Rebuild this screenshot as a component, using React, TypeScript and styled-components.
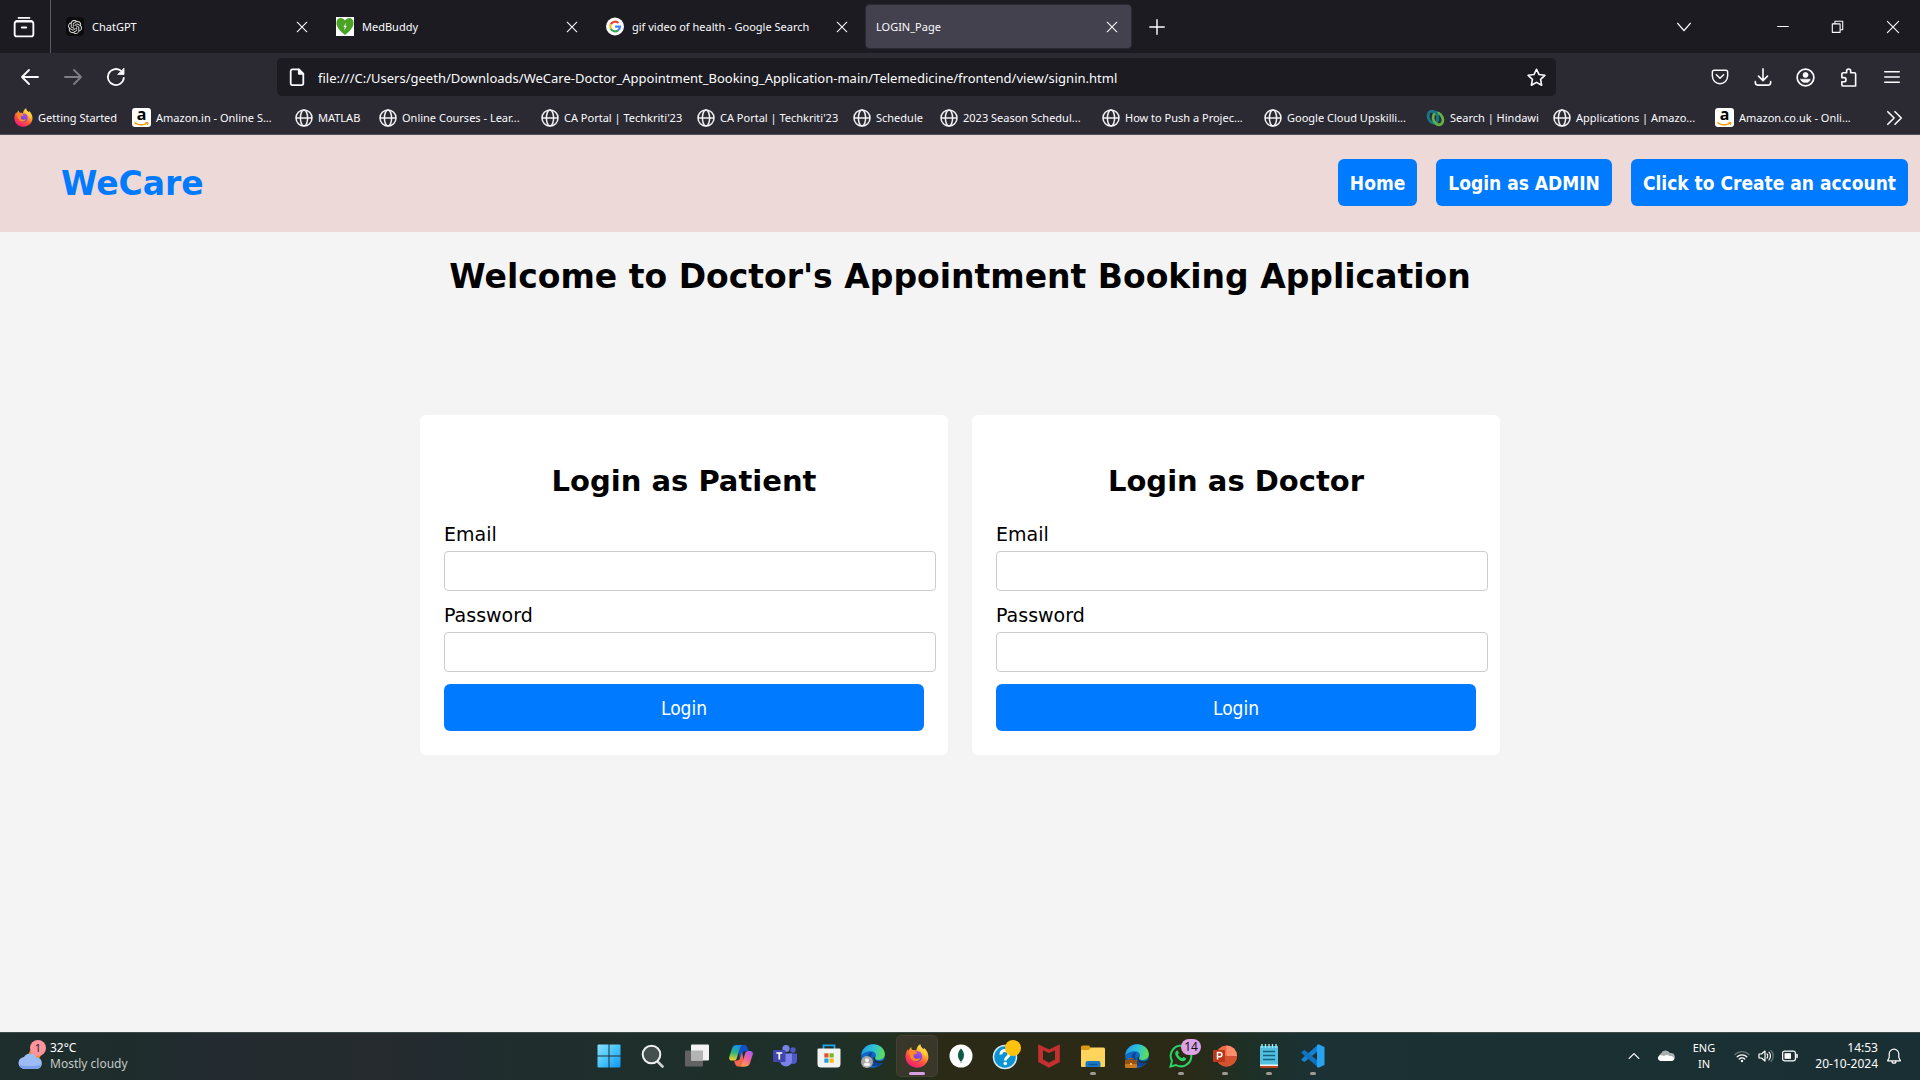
import React, { useId } from "react";
import styled, { createGlobalStyle, css } from "styled-components";
import { SiOpenai } from "react-icons/si";

const ui = '"Noto Sans", "Open Sans", sans-serif';
const page = '"DejaVu Sans", Verdana, sans-serif';
const pageCondensed = '"DejaVu Sans Condensed", Tahoma, sans-serif';

const Global = createGlobalStyle`
  *, *::before, *::after { box-sizing: border-box; }
  body { margin: 0; background: #f4f4f4; }
  button, input { font: inherit; }
  button { border: 0; padding: 0; background: none; color: inherit; cursor: pointer; }
  a { color: inherit; text-decoration: none; }
  svg { display: block; flex: none; }
`;

const Screen = styled.div`
  display: flex;
  flex-direction: column;
  min-height: 100vh;
  font-family: ${ui};
`;

/* ---------- browser ---------- */

const Browser = styled.header`
  background: #2b2a33;
  color: #fbfbfe;
  border-bottom: 1px solid #52525e;
`;

const TabBar = styled.div`
  display: flex;
  align-items: center;
  height: 53px;
  background: #1c1b22;
`;

const ViewButton = styled.button`
  display: grid;
  place-items: center;
  width: 51px;
  height: 53px;
  margin-right: 5px;
  padding-right: 2px;
  border-right: 1px solid #5b5b66;
`;

const TabList = styled.nav`
  display: flex;
  gap: 5px;
`;

const Tab = styled.div<{ $active?: boolean }>`
  display: flex;
  align-items: center;
  gap: 8px;
  width: 265px;
  height: 43px;
  padding: 0 12px 0 10px;
  border-radius: 4px;
  ${(p) => p.$active && css`background: #42414d; box-shadow: 0 0 2px #55545f;`}
`;

const TabTitle = styled.span`
  flex: 1;
  white-space: nowrap;
  font-size: 11px;
`;

const IconButton = styled.button<{ $width?: number; $dim?: boolean }>`
  display: grid;
  place-items: center;
  width: ${(p) => p.$width ?? 43}px;
  height: 32px;
  opacity: ${(p) => (p.$dim ? 0.4 : 1)};
`;

const CloseTab = styled(IconButton)`
  width: 14px;
  height: 24px;
`;

const Spacer = styled.div`
  flex: 1;
`;

const WindowControls = styled.div`
  display: flex;
`;

const AllTabs = styled(IconButton)`
  margin-right: 50px;
`;

const NavBar = styled.div`
  display: flex;
  align-items: center;
  height: 48px;
  padding: 0 7px 0 8px;
`;

const UrlBox = styled.label`
  display: flex;
  flex: 1;
  align-items: center;
  gap: 12px;
  height: 38px;
  margin: 0 142px 0 140px;
  padding: 0 10px 0 11px;
  border-radius: 5px;
  background: #1c1b22;
`;

const UrlInput = styled.input`
  flex: 1;
  min-width: 0;
  padding: 1px 0 0;
  border: 0;
  outline: 0;
  background: transparent;
  color: #fbfbfe;
  font-size: 13px;
`;

const Bookmarks = styled.nav`
  display: flex;
  align-items: center;
  height: 33px;
  padding-left: 14px;
`;

const Bookmark = styled.a<{ $width: number }>`
  display: flex;
  flex: none;
  align-items: center;
  gap: 5px;
  width: ${(p) => p.$width}px;
  white-space: nowrap;
  font-size: 11px;
`;

/* ---------- web page ---------- */

const Site = styled.main`
  flex: 1;
  background: #f4f4f4;
  color: #000;
  font-family: ${page};
`;

const SiteHeader = styled.header`
  display: flex;
  align-items: center;
  justify-content: space-between;
  padding: 24px 12px 26px 61px;
  background: #ecd9d8;
`;

const Brand = styled.div`
  padding-top: 3px;
  color: #007bff;
  font-size: 33px;
  font-weight: bold;
  line-height: 40px;
`;

const SiteNav = styled.nav`
  display: flex;
  gap: 19px;
`;

const NavLink = styled.a`
  padding: 13px 12px 11px;
  border-radius: 6px;
  background: #007bff;
  color: #fff;
  font: bold 19px/23px ${pageCondensed};
`;

const Welcome = styled.h1`
  margin: 25px 0 118px;
  text-align: center;
  font-size: 33px;
  line-height: 40px;
`;

const Forms = styled.div`
  display: flex;
  justify-content: center;
  gap: 24px;
`;

const Card = styled.form`
  width: 528px;
  padding: 24px;
  border-radius: 6px;
  background: #fff;
`;

const CardTitle = styled.h2`
  margin: 25px 0 23px;
  text-align: center;
  font-size: 29px;
  line-height: 35px;
`;

const FieldLabel = styled.label`
  display: block;
  margin-bottom: 5px;
  font-size: 19px;
  line-height: 24px;
`;

const Field = styled.input`
  display: block;
  width: calc(100% + 12px);
  height: 40px;
  margin-bottom: 12px;
  padding: 0 10px;
  border: 1px solid #ccc;
  border-radius: 4px;
  background: #fff;
  font-size: 19px;
`;

const Submit = styled.button`
  display: block;
  width: 100%;
  padding: 13px 12px 11px;
  border-radius: 6px;
  background: #007bff;
  color: #fff;
  font: 19px/23px ${pageCondensed};
`;

/* ---------- taskbar ---------- */

const Taskbar = styled.footer`
  display: grid;
  grid-template-columns: 1fr auto 1fr;
  align-items: center;
  height: 48px;
  padding-bottom: 2px;
  border-top: 1px solid #3c4a48;
  background: linear-gradient(90deg, #1e2e2d 0%, #1e2d2c 7%, #222b30 10%, #252b2e 20%, #222b30 23%, #1f2e2d 27%, #1e3029 43%, #22301f 47%, #2a2a17 49%, #2a2a17 62%, #1e3026 65%, #1b3133 68%, #1a2f33 100%);
  color: #fff;
`;

const Weather = styled.button`
  display: flex;
  align-items: center;
  gap: 4px;
  justify-self: start;
  padding-left: 18px;
  text-align: left;
`;

const WeatherText = styled.span`
  display: grid;
  font-size: 12px;
  line-height: 16px;
`;

const Muted = styled.span`
  color: #c4c9c8;
`;

const Apps = styled.div`
  display: flex;
  gap: 4px;
  padding-left: 2px;
`;

const AppButton = styled.button<{ $active?: boolean }>`
  position: relative;
  display: grid;
  place-items: center;
  width: 40px;
  height: 40px;
  border-radius: 4px;
  ${(p) => p.$active && css`background: #38372a; box-shadow: 0 0 0 1px #414033;`}
`;

const Running = styled.span<{ $active?: boolean }>`
  position: absolute;
  left: 50%;
  bottom: 1px;
  width: ${(p) => (p.$active ? 16 : 6)}px;
  height: 3px;
  border-radius: 2px;
  background: ${(p) => (p.$active ? "#d8a0e0" : "#9b9b92")};
  transform: translateX(-50%);
`;

const Badge = styled.span`
  position: absolute;
  top: 3px;
  right: 0;
  min-width: 20px;
  border-radius: 8px;
  background: #dca4e4;
  color: #111;
  font-size: 12px;
  line-height: 16px;
  text-align: center;
`;

const Tray = styled.div`
  display: flex;
  align-items: center;
  justify-self: end;
  padding-right: 20px;
  line-height: 16px;
`;

const TrayButton = styled.button<{ $width: number }>`
  display: grid;
  place-items: center;
  width: ${(p) => p.$width}px;
  font-size: 11px;
`;

const Clock = styled.button`
  display: grid;
  width: 72px;
  margin-right: 8px;
  text-align: right;
  font-size: 12px;
`;

/* ---------- drawings ---------- */

const Line = ({ d, size = 20, w = 1.6, color = "#fbfbfe", children }: { d?: string; size?: number; w?: number; color?: string; children?: React.ReactNode }) => (
  <svg width={size} height={size} viewBox="0 0 20 20" fill="none" stroke={color} strokeWidth={w} strokeLinecap="round" strokeLinejoin="round" aria-hidden>
    {d && <path d={d} />}
    {children}
  </svg>
);

const Cross = ({ size = 12, w = 1.8 }) => <Line size={size} w={w} d="M2 2 18 18M18 2 2 18" />;

const Globe = () => (
  <svg width="18" height="18" viewBox="0 0 18 18" fill="none" stroke="#f2f2f5" strokeWidth="1.5" aria-hidden>
    <circle cx="9" cy="9" r="8" />
    <ellipse cx="9" cy="9" rx="3.6" ry="8" />
    <path d="M1 9h16" />
  </svg>
);

const AmazonTile = styled.span`
  display: grid;
  justify-items: center;
  align-content: space-between;
  flex: none;
  width: 19px;
  height: 19px;
  padding-bottom: 1px;
  border-radius: 3px;
  background: #fff;
  color: #000;
  font: bold 16px/13px ${ui};
`;

const Amazon = () => (
  <AmazonTile aria-hidden>
    a
    <svg width="15" height="4" viewBox="0 0 15 4" fill="none" stroke="#f90" strokeLinecap="round">
      <path d="M1 .8c3.500 2.600 8.500 2.800 12 .4" strokeWidth="1.500" />
      <path d="M11.800.600l2.300-.100-.600 2.200" strokeWidth="1" />
    </svg>
  </AmazonTile>
);

const Hindawi = () => (
  <svg width="19" height="18" viewBox="0 0 19 18" fill="none" aria-hidden>
    <ellipse cx="7" cy="8.200" rx="4.600" ry="6.200" transform="rotate(-25 7 8.200)" stroke="#17788c" strokeWidth="2.800" />
    <ellipse cx="12" cy="9.800" rx="4.600" ry="6.200" transform="rotate(-25 12 9.800)" stroke="#62b145" strokeWidth="2.800" />
    <path d="M8.500 2.500c2.800 2 3.800 5.500 2.600 9.500" stroke="#17788c" strokeWidth="2.600" />
  </svg>
);

const Firefox = ({ size = 20 }) => {
  const id = useId();
  return (
    <svg width={size} height={size} viewBox="0 0 24 24" aria-hidden>
      <defs>
        <linearGradient id={id + "a"} x1="0.850" y1="0" x2="0.250" y2="1">
          <stop offset="0" stopColor="#fff44f" />
          <stop offset="0.350" stopColor="#ffb02e" />
          <stop offset="0.600" stopColor="#ff5a3a" />
          <stop offset="1" stopColor="#f0147c" />
        </linearGradient>
        <linearGradient id={id + "b"} x1="0.700" y1="0" x2="0.300" y2="1">
          <stop offset="0" stopColor="#b44df0" />
          <stop offset="1" stopColor="#5a3ed0" />
        </linearGradient>
      </defs>
      <path fill={`url(#${id}a)`} d="M15.200.300c.300 2.500 1.200 3.300 3.100 4.900.500-.200.700-.800.600-1.500 3 2.300 4.700 5.900 4.500 9.700C23 19.300 18.100 23.700 12 23.700S.600 19 .500 12.800c0-3.200 1.100-6 2.600-7.800 0 1 .100 1.600.400 2.100.500-1.700 1.500-3.200 2.700-4 0 1.300.500 2.400 1.300 3 1.400-.300 2.800-.100 3.900.400.200-2.600 1.500-5 3.800-6.200z" />
      <circle cx="12" cy="12.300" r="5.200" fill={`url(#${id}b)`} />
      <path fill="#ff8a24" d="M3.700 8.500c1.500-1.700 4.200-2.500 6.700-1.300 1.400.700 1.700 1.900 1.500 2.400-.800.400-2.700.300-3.300 1.700-.200 1 .200 2.400 1.600 3.100 2 .900 3.500-.500 5 0-1.400 2.800-5.500 3.400-8 1.500C4.800 14 4.900 11 3.700 8.500z" />
      <path fill="#ffd23e" d="M15.200.300c.300 2.500 1.200 3.300 3.100 4.900 2.500 2.200 3.300 5.300 2.400 8.300-.900-3-2.500-4.600-4.700-6.300-2.200-1.800-2.500-4.700-.800-6.900z" opacity="0.900" />
    </svg>
  );
};

const OpenAITile = styled.span`
  display: grid;
  place-items: center;
  width: 18px;
  height: 19px;
  border-radius: 4px;
  background: #0c0c0c;
  color: #e6e6e6;
`;

const OpenAI = () => (
  <OpenAITile aria-hidden>
    <SiOpenai size={14} />
  </OpenAITile>
);

const MedBuddy = () => (
  <svg width="18" height="19" viewBox="0 0 19 19" preserveAspectRatio="none" aria-hidden>
    <rect width="19" height="19" fill="#fff" />
    <path fill="#4aa324" d="M9.500 18C5.500 15 .500 11 .500 5.800.500.300 7-.500 9.500 3.500 12-.500 18.500.300 18.500 5.800c0 5.200-5 9.200-9 12.200z" />
    <path fill="#fff" d="M10.800 5.500 7.900 10h1.400l-.900 3.500L11.300 9H9.900z" />
  </svg>
);

const Google = () => (
  <svg width="18" height="19" viewBox="0 0 19 19" fill="none" strokeWidth="2.300" aria-hidden>
    <circle cx="9.500" cy="9.500" r="9.500" fill="#fff" />
    <path stroke="#ea4335" d="M5 7.200A5.200 5.200 0 0 1 13.200 5.900" />
    <path stroke="#fbbc05" d="M5 11.800a5.200 5.200 0 0 1 0-4.600" />
    <path stroke="#34a853" d="M12.800 13.500A5.200 5.200 0 0 1 5 11.800" />
    <path stroke="#4285f4" d="M9.600 9.700h5.100c0 1.600-.600 2.800-1.900 3.800" />
  </svg>
);

const Edge = ({ person }: { person?: boolean }) => {
  const id = useId();
  return (
    <svg width="24" height="24" viewBox="0 0 24 24" aria-hidden>
      <defs>
        <linearGradient id={id} x1="0" y1="0.300" x2="1" y2="0.500">
          <stop offset="0" stopColor="#259be8" />
          <stop offset="0.500" stopColor="#2cc3d6" />
          <stop offset="1" stopColor="#5fe052" />
        </linearGradient>
      </defs>
      <circle cx="12" cy="12" r="11.800" fill="#1267c4" />
      <path fill={`url(#${id})`} d="M.300 11C1 4.500 6.200.200 12 .200c7 0 11.900 5 11.900 9.900 0 3.600-2.800 5.800-6.100 5.800-3 0-3.900-1-3.900-1.600 0-.600 1-1.200 1-2.900 0-2.300-2.200-4.100-5-4.100C6 7.300 2.300 8.800.300 11z" />
      <path fill="#0c4597" d="M9.300 8.200c-2 1.400-3 4-2.500 7 .600 4.500 4.700 7.700 9.500 7.200 2.800-.800 5-2.800 6.300-4.700-5.300 2.400-12.400.500-12.400-5.500 0-1.600.500-3 1.400-3.900z" />
      <path fill="#1d2d2a" d="M14.300 13.200c-.900 1.700-.200 3.500 2.500 4 2.800.500 5.200-.500 7.200-2.300v4l-2-.500c-5.300 2.200-10.500-.600-9.500-5.200z" />
      {person ? (
        <g>
          <circle cx="6" cy="18" r="6" fill="#a7a7a7" />
          <circle cx="6" cy="16.300" r="2" fill="#f0f0f0" />
          <path d="M2.600 21c0-3.300 6.800-3.300 6.800 0-1.800 1.900-5 1.900-6.800 0z" fill="#f0f0f0" />
        </g>
      ) : (
        <g>
          <path d="M4 16v-1.500h4V16" fill="none" stroke="#9a5a10" strokeWidth="1.200" />
          <rect x="0" y="16" width="12" height="8" rx="1" fill="#c9791b" />
          <path d="M0 17a1 1 0 0 1 1-1h10a1 1 0 0 1 1 1v3H0z" fill="#99520d" />
          <rect x="5" y="19" width="2" height="2" fill="#f8c15a" />
        </g>
      )}
    </svg>
  );
};

const Windows = () => (
  <svg width="24" height="24" viewBox="0 0 24 24" aria-hidden>
    <defs>
      <linearGradient id="win" gradientUnits="userSpaceOnUse" x1="0" y1="0" x2="24" y2="24">
        <stop stopColor="#8be1fd" />
        <stop offset="0.500" stopColor="#48c4fc" />
        <stop offset="1" stopColor="#0c93f8" />
      </linearGradient>
    </defs>
    <path fill="url(#win)" d="M1.500.500h10v11H.500v-10a1 1 0 0 1 1-1zM12.500.500h10a1 1 0 0 1 1 1v10h-11zM.500 12.500h11v11h-10a1 1 0 0 1-1-1zM12.500 12.500h11v10a1 1 0 0 1-1 1h-10z" />
  </svg>
);

const Search = () => (
  <svg width="24" height="24" viewBox="0 0 24 24" aria-hidden>
    <path d="m16.500 17.500 5 5" stroke="#cfd2d1" strokeWidth="2.600" strokeLinecap="round" />
    <circle cx="10.500" cy="10.500" r="8.800" fill="#44504e" stroke="#eef0ef" strokeWidth="2" />
  </svg>
);

const TaskView = () => (
  <svg width="24" height="24" viewBox="0 0 24 24" aria-hidden>
    <rect x="0" y="6.500" width="18" height="16" rx="1" fill="#626262" />
    <rect x="6" y="0.500" width="18" height="16" rx="1" fill="#f3f3f3" />
    <rect x="6" y="6.500" width="12" height="10" fill="#b4b4b4" />
  </svg>
);

const Copilot = () => (
  <svg width="24" height="24" viewBox="0 0 24 24" aria-hidden>
    <defs>
      <linearGradient id="cpa" x1="0.500" y1="0" x2="0.400" y2="1">
        <stop stopColor="#1a8df0" />
        <stop offset="0.500" stopColor="#2eb67a" />
        <stop offset="1" stopColor="#f6d02c" />
      </linearGradient>
      <linearGradient id="cpb" x1="0.700" y1="0" x2="0.300" y2="1">
        <stop stopColor="#b05cf0" />
        <stop offset="0.500" stopColor="#f0609a" />
        <stop offset="1" stopColor="#ffa04a" />
      </linearGradient>
    </defs>
    <path fill="#1450c8" d="M8 1h7.500c1.500 0 2.400 1 2.800 2.400L19.500 7h-3c-1.700 0-2.700 1-3.200 2.700L11 16z" />
    <path fill="#f2674e" d="M16 22.500H9c-1.500 0-2.400-1-2.800-2.400L5 16.500h3c1.700 0 2.700-1 3.200-2.700L13 8z" />
    <path fill="url(#cpa)" d="M7.500 1h6c-1.500.400-2.200 1.500-2.700 3.100L8 13.700c-.500 1.800-1.500 2.800-3.300 2.800H3C.800 16.500-.300 15 .300 12.800L3.200 4C3.900 2 5.300 1 7.500 1z" />
    <path fill="url(#cpb)" d="M16.500 22.500h-6c1.500-.400 2.200-1.500 2.700-3.100L16 9.800C16.500 8 17.500 7 19.300 7H21c2.200 0 3.300 1.500 2.700 3.700l-2.900 8.800c-.700 2-2.100 3-4.300 3z" />
  </svg>
);

const Teams = () => (
  <svg width="24" height="24" viewBox="0 0 24 24" aria-hidden>
    <circle cx="20" cy="6" r="2.700" fill="#5059c9" />
    <path d="M16 9.500h8v6.500a4 4 0 0 1-8 0z" fill="#5059c9" />
    <circle cx="13" cy="4.500" r="3.600" fill="#7b83eb" />
    <path d="M7 9.500h12v7a6 6 0 0 1-12 0z" fill="#7b83eb" />
    <rect x="0" y="6" width="12.500" height="12" rx="1" fill="#4046ab" />
    <path d="M3.300 9h6M6.300 9v6.500" stroke="#fff" strokeWidth="1.700" />
  </svg>
);

const Store = () => (
  <svg width="24" height="24" viewBox="0 0 24 24" aria-hidden>
    <path d="M6.500 5V1.300h11V5" fill="none" stroke="#20a8ec" strokeWidth="1.800" />
    <path d="M1.500 4.500h21a1 1 0 0 1 1 1V20a3.500 3.500 0 0 1-3.500 3.500H4A3.500 3.500 0 0 1 .500 20V5.500a1 1 0 0 1 1-1z" fill="#f1f3f3" />
    <path d="M7.300 9.300h4.200v4.200H7.300z" fill="#e8502a" />
    <path d="M12.500 9.300h4.200v4.200h-4.200z" fill="#7db61c" />
    <path d="M7.300 14.500h4.200v4.200H7.300z" fill="#1ba1e2" />
    <path d="M12.500 14.500h4.200v4.200h-4.200z" fill="#f9b512" />
  </svg>
);

const Mongo = () => (
  <svg width="24" height="24" viewBox="0 0 24 24" aria-hidden>
    <circle cx="12" cy="12" r="11.500" fill="#fff" />
    <path d="M12 4.500c3.300 3.300 4.600 8.500.400 12.800l-.200 2h-.400l-.200-2C7.400 13 8.700 7.800 12 4.500z" fill="#116149" />
    <path d="M12 6v11" stroke="#0a4633" strokeWidth="0.700" />
  </svg>
);

const Help = () => (
  <svg width="32" height="34" viewBox="0 0 32 34" aria-hidden>
    <circle cx="16" cy="18" r="11.500" fill="#0c93d4" stroke="#d8eaf2" strokeWidth="1.500" />
    <path d="M12 15.500c-.500-5.500 8.300-5.500 8 0 0 2.700-3.700 2.700-3.700 6" fill="none" stroke="#fff" strokeWidth="3" />
    <circle cx="16.300" cy="24.500" r="1.800" fill="#fff" />
    <circle cx="24" cy="9" r="8" fill="#ffc20e" />
  </svg>
);

const McAfee = () => (
  <svg width="24" height="24" viewBox="0 0 24 24" aria-hidden>
    <path d="M1.200.300 12 5.500 22.800.300V18L12 23.800 1.200 18z" fill="#c5302f" />
    <path d="M6 6.200 12 9l6-2.800v9.300l-6 3.200-6-3.200z" fill="#2a2a18" />
  </svg>
);

const Explorer = () => (
  <svg width="24" height="24" viewBox="0 0 24 24" aria-hidden>
    <path d="M0 3a1.500 1.500 0 0 1 1.500-1.500H8l2 2.500-2 3H0z" fill="#d99a12" />
    <path d="M0 6h7.500l2.500-2.500h12.500A1.500 1.500 0 0 1 24 5v17a1 1 0 0 1-1 1H1a1 1 0 0 1-1-1z" fill="#ffd45c" />
    <path d="M4.500 23v-4a2 2 0 0 1 2-2h11a2 2 0 0 1 2 2v4z" fill="#1b78c4" />
    <path d="M8 20.500h8" stroke="#0f549a" strokeWidth="1.500" strokeLinecap="round" />
  </svg>
);

const WhatsApp = () => (
  <svg width="24" height="24" viewBox="0 0 24 24" aria-hidden>
    <path d="M1.500 22.500 3 17A10.300 10.300 0 1 1 7 21z" fill="none" stroke="#2bd366" strokeWidth="2" />
    <path d="M8.400 6.500c.600 0 1.400 2.200 1.400 2.600 0 .500-1 1.200-.900 1.500.900 1.700 2.200 2.900 4 3.600.400.100 1.200-1.400 1.600-1.300.500.100 2.600 1.200 2.600 1.400 0 2-1.700 3-3.300 3C10.500 17 6.300 12.600 6.200 9.500c0-1.600 1.100-3 2.200-3z" fill="#2bd366" />
  </svg>
);

const PowerPoint = () => (
  <svg width="24" height="24" viewBox="0 0 24 24" aria-hidden>
    <circle cx="13.500" cy="12" r="10.500" fill="#ed6c47" />
    <path d="M13.500 1.500A10.500 10.500 0 0 1 24 12H13.500z" fill="#ff8f6b" />
    <path d="M3 12h21a10.500 10.500 0 0 1-21 0z" fill="#d35230" />
    <rect x="0" y="6" width="12" height="12" rx="1" fill="#b9371a" />
    <path d="M4.500 15.500v-7h2.300a2 2 0 0 1 0 4.200H4.500" fill="none" stroke="#fff" strokeWidth="1.500" />
  </svg>
);

const Notepad = () => (
  <svg width="24" height="24" viewBox="0 0 24 24" aria-hidden>
    <path d="M3 20h18v3a1 1 0 0 1-1 1H4a1 1 0 0 1-1-1z" fill="#b4471c" />
    <path d="M3 19h18v3H3z" fill="#f3f3f3" />
    <path d="M3 2h18v18.500H3z" fill="#54c0e0" />
    <path d="M5 0v4M8.500 0v4M12 0v4M15.500 0v4M19 0v4" stroke="#a7e6f5" strokeWidth="1.400" />
    <path d="M6 7.500h12M6 11.500h12M6 15.500h12" stroke="#13627e" strokeWidth="1.400" />
  </svg>
);

const VSCode = () => (
  <svg width="24" height="24" viewBox="0 0 24 24" aria-hidden>
    <path d="M17.500.200v6.500L3.500 18 .500 16.300v-1.200z" fill="#1580cc" />
    <path d="M17.500 23.800v-6.500L3.500 6 .500 7.700v1.200z" fill="#1173bd" />
    <path d="m17.500.200 6 2.800v18l-6 2.800-1.500-.800V1z" fill="#27a3f2" />
  </svg>
);

const WeatherIcon = () => (
  <svg width="28" height="36" viewBox="0 0 28 36" aria-hidden>
    <circle cx="17" cy="16" r="6" fill="#f5892a" />
    <path d="M7 31a6 6 0 0 1-1-12 7 7 0 0 1 12.500.500A5.800 5.800 0 0 1 19 31z" fill="#9cbcf5" />
    <path d="M1.500 26.500c5 2 16 2 22 0A5.500 5.500 0 0 1 19 31H7c-3 0-5-2-5.500-4.500z" fill="#7da1ec" />
    <circle cx="20" cy="10" r="8" fill="#ff949c" />
    <text x="20" y="14" textAnchor="middle" fontFamily="Noto Sans, sans-serif" fontSize="11" fill="#222">1</text>
  </svg>
);

const FirefoxView = () => (
  <Line size={22} w={1.7}>
    <path d="M3 4.500h14" />
    <path d="M5 1.700h10" />
    <rect x="1.500" y="5" width="17" height="13.500" rx="2" />
    <path d="M8 10.500h4" />
  </Line>
);

/* ---------- data ---------- */

const tabs = [
  { title: "ChatGPT", icon: <OpenAI /> },
  { title: "MedBuddy", icon: <MedBuddy /> },
  { title: "gif video of health - Google Search", icon: <Google /> },
  { title: "LOGIN_Page", active: true },
];

const bookmarks = [
  { title: "Getting Started", width: 118, icon: <Firefox size={19} /> },
  { title: "Amazon.in - Online S...", width: 163, icon: <Amazon /> },
  { title: "MATLAB", width: 84, icon: <Globe /> },
  { title: "Online Courses - Lear...", width: 162, icon: <Globe /> },
  { title: "CA Portal | Techkriti'23", width: 156, icon: <Globe /> },
  { title: "CA Portal | Techkriti'23", width: 156, icon: <Globe /> },
  { title: "Schedule", width: 87, icon: <Globe /> },
  { title: "2023 Season Schedul...", width: 162, icon: <Globe /> },
  { title: "How to Push a Projec...", width: 162, icon: <Globe /> },
  { title: "Google Cloud Upskilli...", width: 162, icon: <Globe /> },
  { title: "Search | Hindawi", width: 127, icon: <Hindawi /> },
  { title: "Applications | Amazo...", width: 162, icon: <Globe /> },
  { title: "Amazon.co.uk - Onli...", width: 155, icon: <Amazon /> },
];

const apps: { name: string; icon: React.ReactNode; active?: boolean; running?: boolean; badge?: string }[] = [
  { name: "Start", icon: <Windows /> },
  { name: "Search", icon: <Search /> },
  { name: "Task view", icon: <TaskView /> },
  { name: "Copilot", icon: <Copilot /> },
  { name: "Teams", icon: <Teams /> },
  { name: "Store", icon: <Store /> },
  { name: "Edge", icon: <Edge person /> },
  { name: "Firefox", icon: <Firefox size={24} />, active: true, running: true },
  { name: "MongoDB Compass", icon: <Mongo /> },
  { name: "Help", icon: <Help /> },
  { name: "McAfee", icon: <McAfee /> },
  { name: "File Explorer", icon: <Explorer />, running: true },
  { name: "Edge work", icon: <Edge /> },
  { name: "WhatsApp", icon: <WhatsApp />, running: true, badge: "14" },
  { name: "PowerPoint", icon: <PowerPoint />, running: true },
  { name: "Notepad", icon: <Notepad />, running: true },
  { name: "Visual Studio Code", icon: <VSCode />, running: true },
];

const LoginCard = ({ role }: { role: string }) => {
  const id = useId();
  return (
    <Card onSubmit={(e: React.FormEvent) => e.preventDefault()}>
      <CardTitle>Login as {role}</CardTitle>
      <FieldLabel htmlFor={id + "email"}>Email</FieldLabel>
      <Field id={id + "email"} type="email" />
      <FieldLabel htmlFor={id + "password"}>Password</FieldLabel>
      <Field id={id + "password"} type="password" />
      <Submit type="submit">Login</Submit>
    </Card>
  );
};

export default function App() {
  return (
    <Screen>
      <Global />
      <Browser>
        <TabBar>
          <ViewButton aria-label="Firefox View"><FirefoxView /></ViewButton>
          <TabList>
            {tabs.map((t) => (
              <Tab key={t.title} $active={t.active}>
                {t.icon}
                <TabTitle>{t.title}</TabTitle>
                <CloseTab aria-label="Close tab"><Cross size={12} /></CloseTab>
              </Tab>
            ))}
          </TabList>
          <IconButton $width={52} aria-label="New tab"><Line size={16} w={1.8} d="M10 1v18M1 10h18" /></IconButton>
          <Spacer />
          <AllTabs aria-label="List all tabs"><Line size={18} d="m3 6 7 8 7-8" /></AllTabs>
          <WindowControls>
            <IconButton $width={55} aria-label="Minimize"><Line size={12} w={1.7} d="M1 9h18" /></IconButton>
            <IconButton $width={55} aria-label="Restore"><Line size={13} w={1.7} d="M2 6h12v13H2zM6 6V2h12v13h-4" /></IconButton>
            <IconButton $width={55} aria-label="Close"><Cross size={14} w={1.6} /></IconButton>
          </WindowControls>
        </TabBar>
        <NavBar>
          <IconButton aria-label="Back"><Line size={20} w={1.8} d="M18 10H2M9 3l-7 7 7 7" /></IconButton>
          <IconButton aria-label="Forward" $dim><Line size={20} w={1.8} d="M2 10h16M11 3l7 7-7 7" /></IconButton>
          <IconButton aria-label="Reload">
            <Line size={20} w={1.8}>
              <path d="M17.800 11A8 8 0 1 1 14.500 3.500" />
              <path d="M18 1.500v6h-6z" fill="#fbfbfe" strokeWidth="0.800" />
            </Line>
          </IconButton>
          <UrlBox>
            <Line size={18} w={2}>
              <path d="M4.500 1.500h7.500l5 5v10.500a2 2 0 0 1-2 2H5a2 2 0 0 1-2-2V3.500a2 2 0 0 1 1.500-2z" />
              <path d="M12 1.500v5h5z" fill="#fbfbfe" />
            </Line>
            <UrlInput aria-label="Address" defaultValue="file:///C:/Users/geeth/Downloads/WeCare-Doctor_Appointment_Booking_Application-main/Telemedicine/frontend/view/signin.html" />
            <Line size={19} w={1.7} d="m10 1.300 2.700 5.600 6.100.800-4.500 4.200 1.100 6.200-5.400-3-5.400 3 1.100-6.200L1.200 7.700l6.100-.800z" />
          </UrlBox>
          <IconButton aria-label="Pocket"><Line size={18} w={1.6}><path d="M3.500 2.500h13a2 2 0 0 1 2 2V9a8.500 8.500 0 0 1-17 0V4.500a2 2 0 0 1 2-2z" /><path d="m6 7.500 4 4 4-4" /></Line></IconButton>
          <IconButton aria-label="Downloads"><Line size={18} w={1.8} d="M10 1v13M5 9l5 5 5-5M1.500 15v1.500a2.500 2.500 0 0 0 2.500 2.500h12a2.500 2.500 0 0 0 2.500-2.500V15" /></IconButton>
          <IconButton aria-label="Account"><Line size={19} w={1.8}><circle cx="10" cy="10" r="8.800" /><circle cx="10" cy="7.300" r="2.700" fill="#fbfbfe" strokeWidth="0.500" /><path d="M5 11.800h10c0 4.700-10 4.700-10 0z" fill="#fbfbfe" strokeWidth="0.500" /></Line></IconButton>
          <IconButton aria-label="Extensions"><Line size={19} w={1.7} d="M8 5V3.200a2 2 0 0 1 4.300 0V5H16a1.500 1.500 0 0 1 1.500 1.500V19H4.500a1.500 1.500 0 0 1-1.500-1.500v-3h2.200a2.200 2.200 0 0 0 0-4.400H3V6.500A1.500 1.500 0 0 1 4.500 5z" /></IconButton>
          <IconButton aria-label="Menu"><Line size={16} w={2} d="M1 3.500h18M1 10h18M1 16.500h18" /></IconButton>
        </NavBar>
        <Bookmarks>
          {bookmarks.map((b, i) => (
            <Bookmark key={i} href="#" $width={b.width}>{b.icon}{b.title}</Bookmark>
          ))}
          <Spacer />
          <IconButton $width={50} aria-label="More bookmarks"><Line size={18} w={1.8} d="m2 3 7 7-7 7M10 3l7 7-7 7" /></IconButton>
        </Bookmarks>
      </Browser>

      <Site>
        <SiteHeader>
          <Brand>WeCare</Brand>
          <SiteNav>
            <NavLink href="#">Home</NavLink>
            <NavLink href="#">Login as ADMIN</NavLink>
            <NavLink href="#">Click to Create an account</NavLink>
          </SiteNav>
        </SiteHeader>
        <Welcome>Welcome to Doctor's Appointment Booking Application</Welcome>
        <Forms>
          <LoginCard role="Patient" />
          <LoginCard role="Doctor" />
        </Forms>
      </Site>

      <Taskbar>
        <Weather>
          <WeatherIcon />
          <WeatherText><span>32°C</span><Muted>Mostly cloudy</Muted></WeatherText>
        </Weather>
        <Apps>
          {apps.map((a) => (
            <AppButton key={a.name} aria-label={a.name} $active={a.active}>
              {a.icon}
              {a.badge && <Badge>{a.badge}</Badge>}
              {a.running && <Running $active={a.active} />}
            </AppButton>
          ))}
        </Apps>
        <Tray>
          <TrayButton $width={32} aria-label="Hidden icons"><Line size={12} w={2.2} d="m2 14 8-8 8 8" /></TrayButton>
          <TrayButton $width={32} aria-label="OneDrive">
            <svg width="18" height="14" viewBox="0 0 18 14" aria-hidden>
              <path d="M4.500 12a4 4 0 0 1-.500-7.500A5 5 0 0 1 13 4a4 4 0 0 1 1.500 8z" fill="#a9afb0" />
              <path d="M4.500 12c-3 0-4.500-2.500-3-4.500 2-2 4-1 5.500-.500 2-1.500 4-1.500 5.500 0 3-.500 4.500 1 4.500 2.500S16 12 14.500 12z" fill="#fff" />
            </svg>
          </TrayButton>
          <TrayButton $width={44}><span>ENG</span><span>IN</span></TrayButton>
          <TrayButton $width={32} aria-label="Wi-Fi">
            <svg width="16" height="14" viewBox="0 0 16 14" fill="none" stroke="#fff" strokeWidth="1.300" strokeLinecap="round" aria-hidden>
              <path d="M1 5.500a10 10 0 0 1 14 0" opacity="0.350" />
              <path d="M3.200 7.800a6.800 6.800 0 0 1 9.600 0M5.300 10a3.800 3.800 0 0 1 5.400 0" />
              <circle cx="8" cy="12" r="1.200" fill="#fff" stroke="none" />
            </svg>
          </TrayButton>
          <TrayButton $width={16} aria-label="Volume">
            <svg width="16" height="14" viewBox="0 0 16 14" fill="none" stroke="#fff" strokeWidth="1.200" strokeLinecap="round" strokeLinejoin="round" aria-hidden>
              <path d="M1 5v4h2.500L7 12V2L3.500 5zM9 5c1 1 1 3 0 4M11 3.200c2 2 2 5.600 0 7.600" />
              <path d="M13 1.500c3 3 3 8 0 11" opacity="0.350" />
            </svg>
          </TrayButton>
          <TrayButton $width={32} aria-label="Battery">
            <svg width="16" height="12" viewBox="0 0 16 12" aria-hidden>
              <rect x="0.600" y="1.200" width="12.800" height="9.600" rx="2" fill="none" stroke="#fff" strokeWidth="1.200" />
              <rect x="2.500" y="3.200" width="6.500" height="5.600" fill="#fff" />
              <path d="M15 4.500v3" stroke="#fff" strokeWidth="1.500" strokeLinecap="round" />
            </svg>
          </TrayButton>
          <Clock><span>14:53</span><span>20-10-2024</span></Clock>
          <TrayButton $width={14} aria-label="Notifications">
            <Line size={16} w={1.5} d="M10 1.500a6 6 0 0 0-6 6V12l-2 4h16l-2-4V7.500a6 6 0 0 0-6-6zM7.500 16.500a2.500 2.500 0 0 0 5 0" color="#fff" />
          </TrayButton>
        </Tray>
      </Taskbar>
    </Screen>
  );
}
